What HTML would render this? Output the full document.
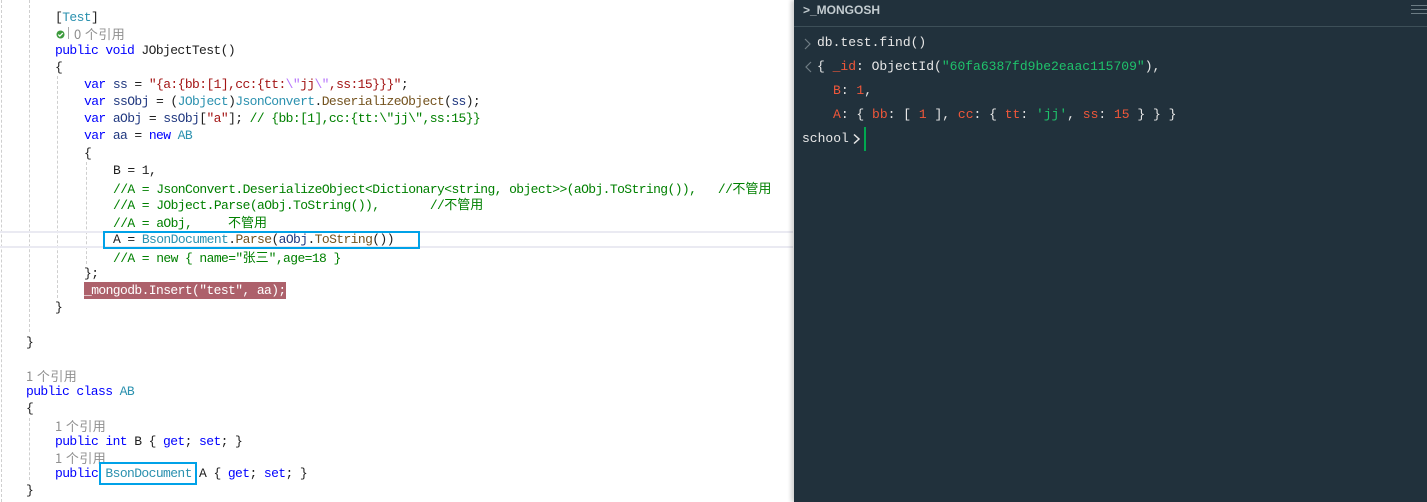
<!DOCTYPE html>
<html><head><meta charset="utf-8"><style>
html,body{margin:0;padding:0;background:#fff}
#r{position:relative;width:1427px;height:502px;overflow:hidden;background:#fff}
.l{position:absolute;height:16px;margin-top:1px;white-space:pre;font:13px/16px "Liberation Mono","Noto Sans CJK SC",monospace;letter-spacing:-.6px;color:#1e1e1e}
.k{color:#0000ff}.t{color:#2b91af}.s{color:#a31515}.c{color:#008000}.m{color:#74531f}.v{color:#1f377f}.esc{color:#b776fb}
.cj{font-family:"Noto Sans CJK SC",sans-serif;letter-spacing:0;font-size:13px}
.gj{font-family:"Noto Sans CJK SC",sans-serif;letter-spacing:.4px;font-size:13px;color:#8f8f8f}
.d{position:absolute;width:0;border-left:1px dashed #cfcfcf}
.box{position:absolute;border:2px solid #00a2e8;box-sizing:border-box}
#p{position:absolute;left:794px;top:0;width:633px;height:502px;background:#21313c;box-shadow:-3px 0 4px rgba(0,0,0,.18)}
.n{position:absolute;margin-top:1px;white-space:pre;font:13px/16px "Liberation Mono",monospace;color:#e8e8e8;letter-spacing:0;font-weight:400}
.r{color:#f0573a}.q{color:#1fc26b}
.h{position:absolute;left:617px;width:16px;height:1px;background:#6c7c84}
</style></head><body><div id="r">
<div class="d" style="left:1px;top:0;height:502px"></div>
<div class="d" style="left:29px;top:0;height:332px"></div>
<div class="d" style="left:29px;top:418px;height:62px"></div>
<div class="d" style="left:57px;top:76px;height:222px"></div>
<div class="d" style="left:86px;top:162px;height:102px"></div>
<div style="position:absolute;left:0;top:231px;width:793px;height:17px;border-top:2px solid #eaeaf2;border-bottom:2px solid #eaeaf2;box-sizing:border-box"></div>
<div class="l" style="left:55px;top:9px">[<span class="t">Test</span>]</div>
<svg style="position:absolute;left:56px;top:30px" width="9" height="9" viewBox="0 0 9 9"><circle cx="4.5" cy="4.5" r="4" fill="#3c9a3c"/><path d="M2.3 4.6l1.5 1.5 3-3" stroke="#fff" stroke-width="1.3" fill="none"/></svg>
<div style="position:absolute;left:68px;top:27px;width:1px;height:12px;background:#aaa"></div>
<div class="l gj" style="left:74px;top:25px">0 个引用</div>
<div class="l" style="left:55px;top:42px"><span class="k">public void</span> JObjectTest()</div>
<div class="l" style="left:55px;top:59px">{</div>
<div class="l" style="left:84px;top:76px"><span class="k">var</span> <span class="v">ss</span> = <span class="s">"{a:{bb:[1],cc:{tt:</span><span class="esc">\"</span><span class="s">jj</span><span class="esc">\"</span><span class="s">,ss:15}}}"</span>;</div>
<div class="l" style="left:84px;top:93px"><span class="k">var</span> <span class="v">ssObj</span> = (<span class="t">JObject</span>)<span class="t">JsonConvert</span>.<span class="m">DeserializeObject</span>(<span class="v">ss</span>);</div>
<div class="l" style="left:84px;top:110px"><span class="k">var</span> <span class="v">aObj</span> = <span class="v">ssObj</span>[<span class="s">"a"</span>]; <span class="c">// {bb:[1],cc:{tt:\"jj\",ss:15}}</span></div>
<div class="l" style="left:84px;top:127px"><span class="k">var</span> <span class="v">aa</span> = <span class="k">new</span> <span class="t">AB</span></div>
<div class="l" style="left:84px;top:145px">{</div>
<div class="l" style="left:113px;top:162px">B = 1,</div>
<div class="l c" style="left:113px;top:179px">//A = JsonConvert.DeserializeObject&lt;Dictionary&lt;string, object&gt;&gt;(aObj.ToString()),   //<span class="cj">不管用</span></div>
<div class="l c" style="left:113px;top:195px">//A = JObject.Parse(aObj.ToString()),       //<span class="cj">不管用</span></div>
<div class="l c" style="left:113px;top:213px">//A = aObj,    <span class="cj" style="margin-left:7px">不管用</span></div>
<div class="l" style="left:113px;top:231px">A = <span class="t">BsonDocument</span>.<span class="m">Parse</span>(<span class="v">aObj</span>.<span class="m">ToString</span>())</div>
<div class="box" style="left:103px;top:231px;width:317px;height:18px"></div>
<div class="l c" style="left:113px;top:248px">//A = new { name="<span class="cj">张三</span>",age=18 }</div>
<div class="l" style="left:84px;top:265px">};</div>
<div style="position:absolute;left:84px;top:282px;width:202px;height:17px;background:#ad616b"></div>
<div class="l" style="left:84px;top:282px;color:#fff">_mongodb.Insert("test", aa);</div>
<div class="l" style="left:55px;top:299px">}</div>
<div class="l" style="left:26px;top:334px">}</div>
<div class="l gj" style="left:26px;top:367px">1 个引用</div>
<div class="l" style="left:26px;top:383px"><span class="k">public class</span> <span class="t">AB</span></div>
<div class="l" style="left:26px;top:400px">{</div>
<div class="l gj" style="left:55px;top:417px">1 个引用</div>
<div class="l" style="left:55px;top:433px"><span class="k">public int</span> B { <span class="k">get</span>; <span class="k">set</span>; }</div>
<div class="l gj" style="left:55px;top:449px">1 个引用</div>
<div class="l" style="left:55px;top:465px"><span class="k">public</span> <span class="t">BsonDocument</span> A { <span class="k">get</span>; <span class="k">set</span>; }</div>
<div class="box" style="left:99px;top:462px;width:98px;height:23px"></div>
<div class="l" style="left:26px;top:482px">}</div>
<div id="p">
<div style="position:absolute;left:9px;top:2px;font:bold 12px/16px 'Liberation Sans',sans-serif;color:#c3ccd0">&gt;_MONGOSH</div>
<div style="position:absolute;left:0;top:26px;width:633px;height:1px;background:#3d4f58"></div>
<div class="h" style="top:5px"></div><div class="h" style="top:9px"></div><div class="h" style="top:13px"></div>
<svg style="position:absolute;left:10px;top:38px" width="8" height="12" viewBox="0 0 8 12"><path d="M1 1l5 5-5 5" stroke="#6f7d84" stroke-width="1.2" fill="none"/></svg>
<div class="n" style="left:23px;top:34px">db.test.find()</div>
<svg style="position:absolute;left:10px;top:61px" width="8" height="12" viewBox="0 0 8 12"><path d="M7 1L2 6l5 5" stroke="#6f7d84" stroke-width="1.2" fill="none"/></svg>
<div class="n" style="left:23px;top:58px">{ <span class="r">_id</span>: ObjectId(<span class="q">"60fa6387fd9be2eaac115709"</span>),</div>
<div class="n" style="left:39px;top:82px"><span class="r">B</span>: <span class="r">1</span>,</div>
<div class="n" style="left:39px;top:106px"><span class="r">A</span>: { <span class="r">bb</span>: [ <span class="r">1</span> ], <span class="r">cc</span>: { <span class="r">tt</span>: <span class="q">'jj'</span>, <span class="r">ss</span>: <span class="r">15</span> } } }</div>
<div class="n" style="left:8px;top:130px">school</div>
<svg style="position:absolute;left:58px;top:133px" width="9" height="12" viewBox="0 0 9 12"><path d="M2 1.5l5 4.5-5 4.5" stroke="#e8e8e8" stroke-width="1.5" fill="none"/></svg>
<div style="position:absolute;left:70px;top:127px;width:2px;height:24px;background:#00a74f"></div>
</div>
</div></body></html>
